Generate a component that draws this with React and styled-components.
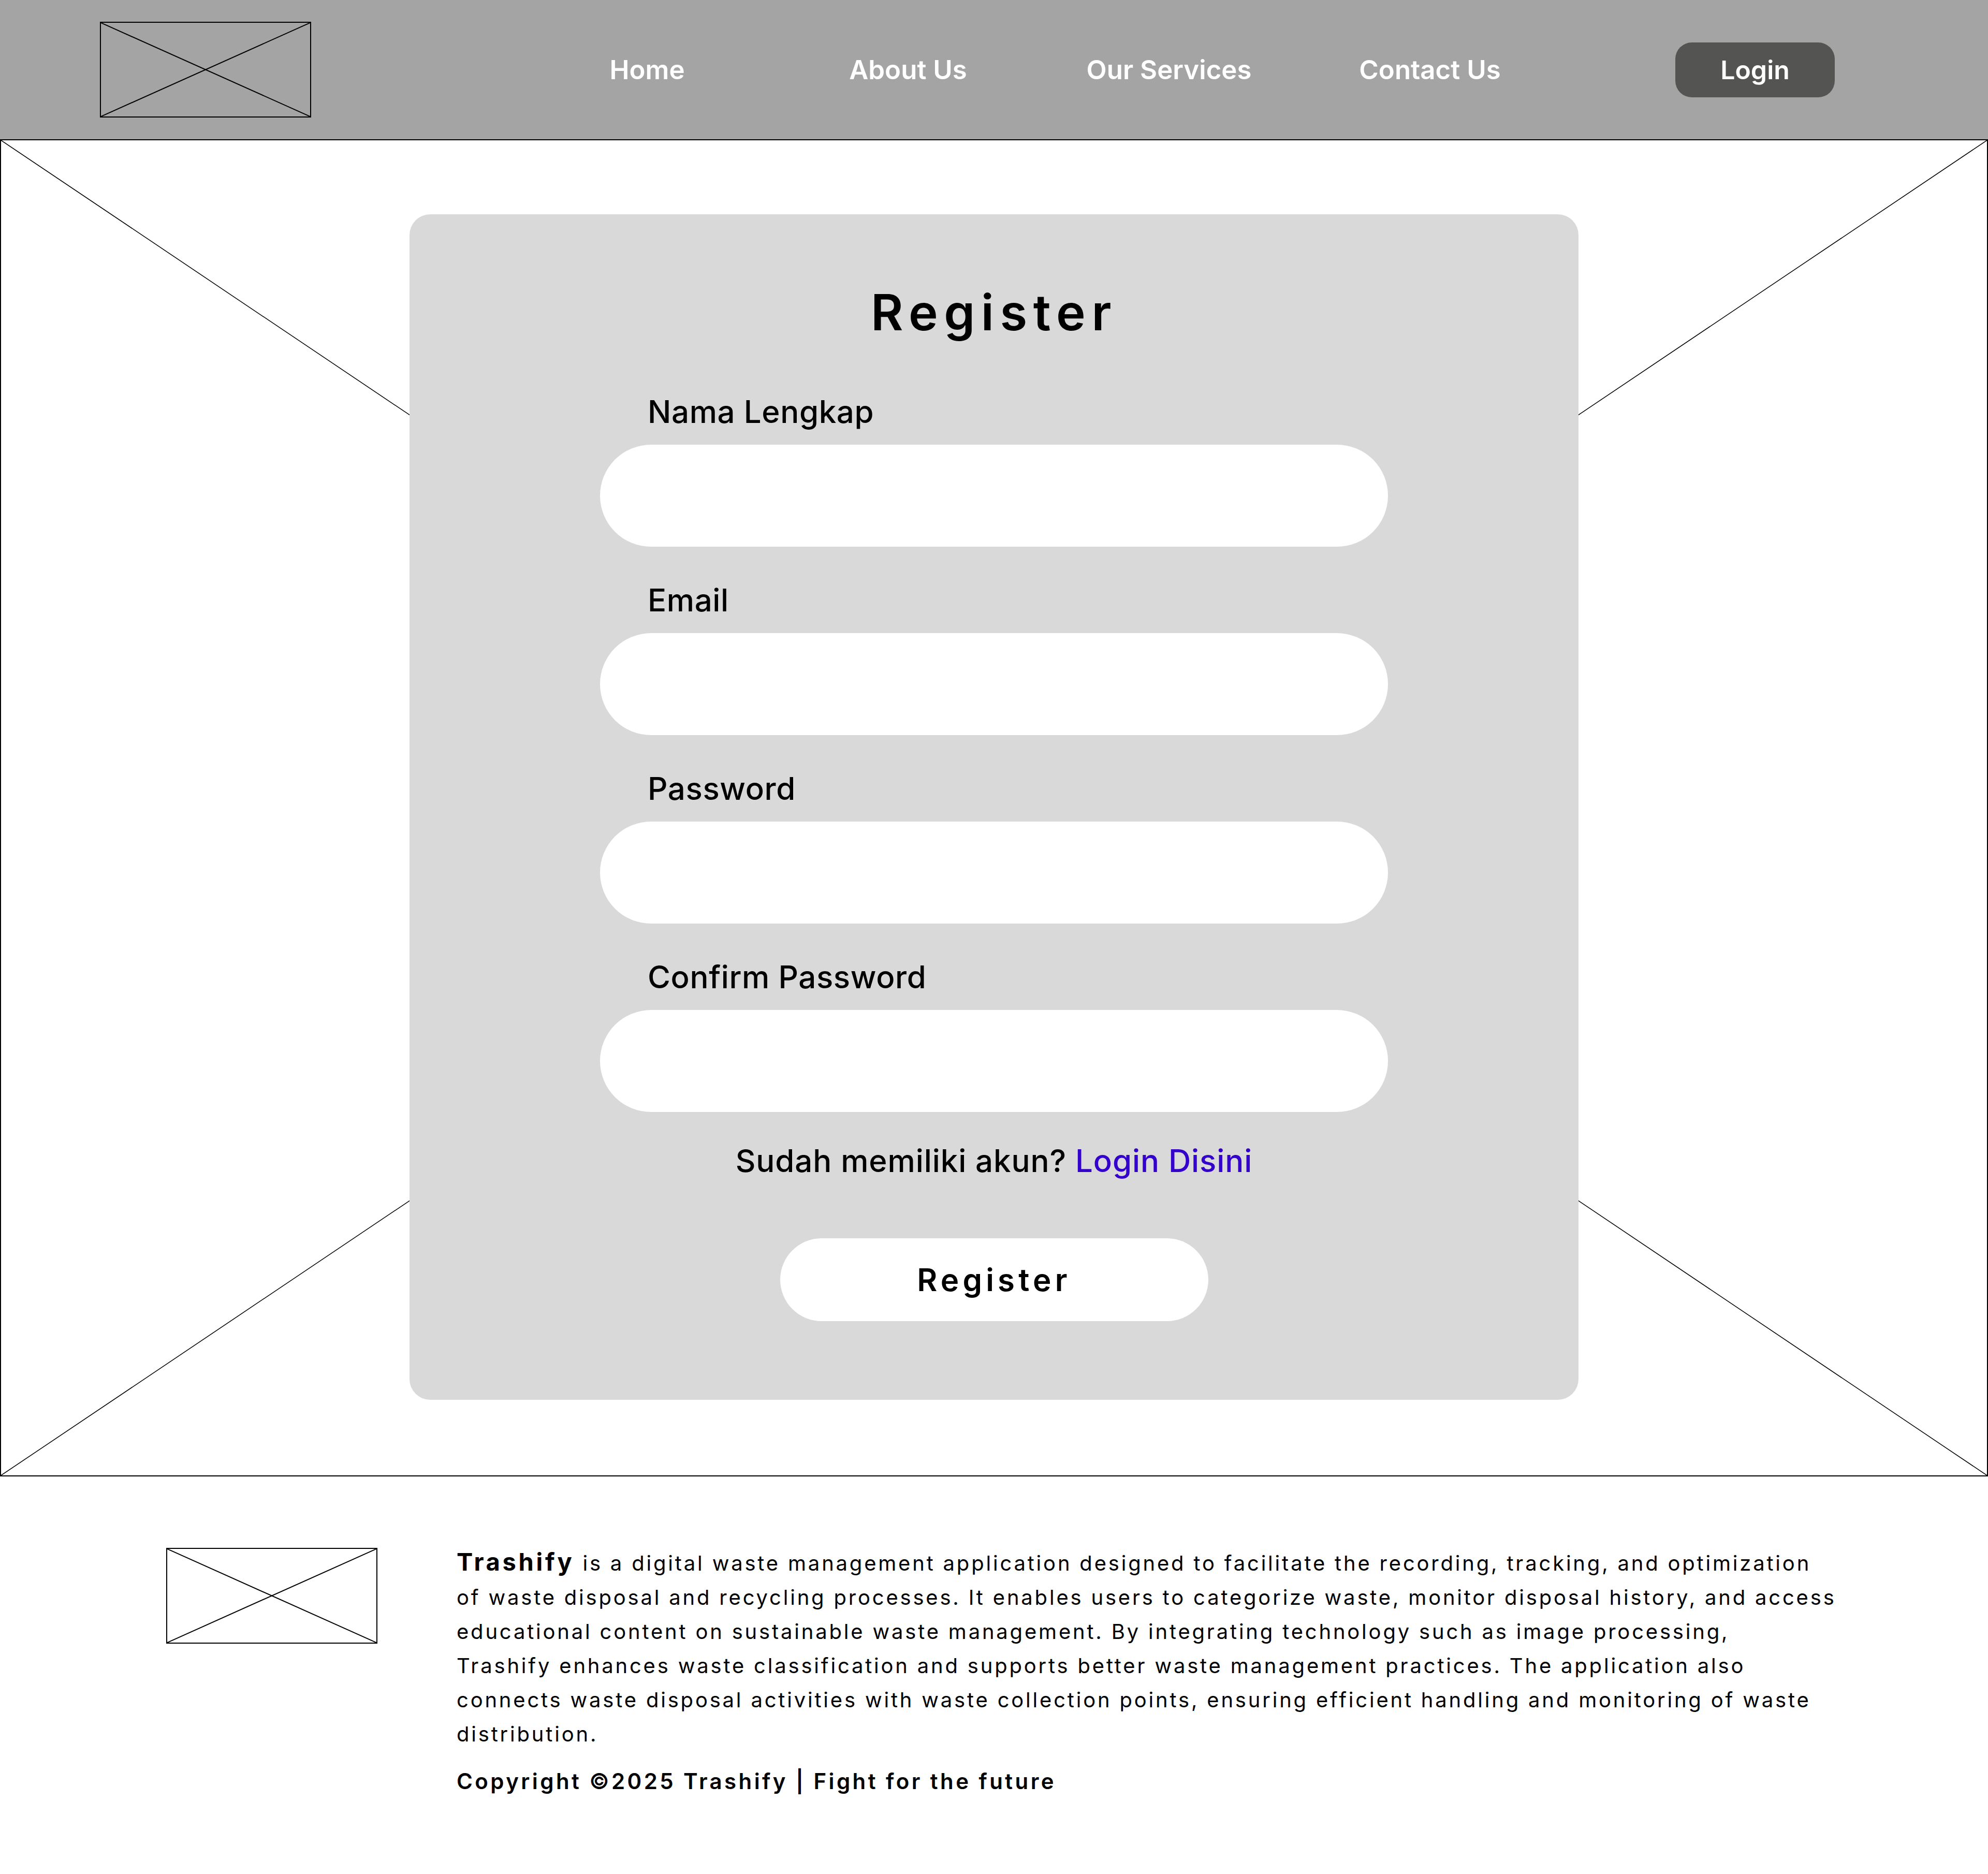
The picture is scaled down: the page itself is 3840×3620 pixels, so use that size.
import React from "react";
import styled, { createGlobalStyle } from "styled-components";

const GlobalStyle = createGlobalStyle`
  * {
    box-sizing: border-box;
  }
  body {
    margin: 0;
    background: #fff;
    font-family: Inter, "Liberation Sans", sans-serif;
    color: #000;
  }
`;

const Page = styled.div`
  width: 3840px;
  min-height: 3620px;
  display: flex;
  flex-direction: column;
`;

const Header = styled.header`
  height: 271px;
  background: #a4a4a4;
  border-bottom: 2px solid #000;
  display: flex;
  align-items: center;
  padding-left: 193px;
`;

const LogoBox = styled.div`
  width: 408px;
  height: 185px;
  border: 2px solid #000;
  flex-shrink: 0;
  svg {
    display: block;
    width: 100%;
    height: 100%;
  }
`;

const Nav = styled.nav`
  display: grid;
  grid-template-columns: repeat(4, 504px);
  margin-left: 397px;
`;

const NavLink = styled.a`
  text-align: center;
  color: #fff;
  font-size: 51px;
  font-weight: 600;
  text-decoration: none;
`;

const LoginButton = styled.button`
  margin-left: 222px;
  width: 308px;
  height: 106px;
  border: none;
  border-radius: 32px;
  background: #545452;
  color: #fff;
  font-family: inherit;
  font-size: 50px;
  font-weight: 600;
`;

const Hero = styled.section`
  position: relative;
  height: 2581px;
  border-bottom: 2px solid #000;
  border-left: 2px solid #000;
  border-right: 2px solid #000;
  padding-top: 143px;
  display: flex;
  justify-content: center;
  align-items: flex-start;
`;

const HeroLines = styled.svg`
  position: absolute;
  inset: 0;
  width: 100%;
  height: 100%;
`;

const Card = styled.div`
  position: relative;
  width: 2258px;
  background: #d9d9d9;
  border-radius: 40px;
  padding: 132px 368px 152px;
  display: flex;
  flex-direction: column;
`;

const Title = styled.h1`
  margin: 0 0 98px;
  text-align: center;
  font-size: 96px;
  line-height: 115px;
  font-weight: 600;
  letter-spacing: 0.12em;
`;

const Field = styled.div`
  display: flex;
  flex-direction: column;
  margin-bottom: 67px;
  &:last-of-type {
    margin-bottom: 58px;
  }
`;

const Label = styled.label`
  padding-left: 92px;
  margin-bottom: 28px;
  font-size: 60px;
  line-height: 72px;
  font-weight: 500;
  letter-spacing: 0.01em;
`;

const Input = styled.input`
  height: 197px;
  width: 100%;
  border: none;
  border-radius: 99px;
  background: #fff;
  padding: 0 80px;
  font-family: inherit;
  font-size: 50px;
  outline: none;
`;

const Switch = styled.p`
  margin: 0 0 114px;
  text-align: center;
  font-size: 60px;
  line-height: 72px;
  font-weight: 500;
  letter-spacing: 0.015em;
`;

const SwitchLink = styled.a`
  color: #3300cc;
  text-decoration: none;
`;

const SubmitButton = styled.button`
  align-self: center;
  width: 827px;
  height: 160px;
  border: none;
  border-radius: 80px;
  background: #fff;
  color: #000;
  font-family: inherit;
  font-size: 60px;
  font-weight: 600;
  letter-spacing: 0.12em;
`;

const Footer = styled.footer`
  display: flex;
  align-items: flex-start;
  padding: 138px 0 120px 321px;
`;

const FooterText = styled.div`
  margin-left: 153px;
  margin-top: -6px;
`;

const About = styled.p`
  margin: 0;
  font-size: 40px;
  line-height: 66px;
  letter-spacing: 0.095em;
  white-space: nowrap;
`;

const Brand = styled.strong`
  font-size: 47px;
  font-weight: 700;
  letter-spacing: 0.1em;
  margin-right: 16px;
`;

const Copyright = styled.p`
  margin: 33px 0 0;
  font-size: 42px;
  line-height: 50px;
  font-weight: 600;
  letter-spacing: 0.105em;
`;

const Placeholder = () => (
  <LogoBox>
    <svg viewBox="0 0 100 100" preserveAspectRatio="none">
      <line x1="0" y1="0" x2="100" y2="100" stroke="#000" strokeWidth="2" vectorEffect="non-scaling-stroke" />
      <line x1="100" y1="0" x2="0" y2="100" stroke="#000" strokeWidth="2" vectorEffect="non-scaling-stroke" />
    </svg>
  </LogoBox>
);

const fields = ["Nama Lengkap", "Email", "Password", "Confirm Password"];

const aboutLines = [
  "of waste disposal and recycling processes. It enables users to categorize waste, monitor disposal history, and access",
  "educational content on sustainable waste management. By integrating technology such as image processing,",
  "Trashify enhances waste classification and supports better waste management practices. The application also",
  "connects waste disposal activities with waste collection points, ensuring efficient handling and monitoring of waste",
  "distribution.",
];

const App = () => {
  return (
    <Page>
      <GlobalStyle />
      <Header>
        <Placeholder />
        <Nav>
          <NavLink href="#">Home</NavLink>
          <NavLink href="#">About Us</NavLink>
          <NavLink href="#">Our Services</NavLink>
          <NavLink href="#">Contact Us</NavLink>
        </Nav>
        <LoginButton>Login</LoginButton>
      </Header>

      <Hero>
        <HeroLines viewBox="0 0 100 100" preserveAspectRatio="none">
          <line x1="0" y1="0" x2="100" y2="100" stroke="#000" strokeWidth="1.5" vectorEffect="non-scaling-stroke" />
          <line x1="100" y1="0" x2="0" y2="100" stroke="#000" strokeWidth="1.5" vectorEffect="non-scaling-stroke" />
        </HeroLines>
        <Card>
          <Title>Register</Title>
          {fields.map((f) => (
            <Field key={f}>
              <Label>{f}</Label>
              <Input type={f.includes("Password") ? "password" : "text"} />
            </Field>
          ))}
          <Switch>
            Sudah memiliki akun? <SwitchLink href="#">Login Disini</SwitchLink>
          </Switch>
          <SubmitButton>Register</SubmitButton>
        </Card>
      </Hero>

      <Footer>
        <Placeholder />
        <FooterText>
          <About>
            <Brand>Trashify</Brand>
            is a digital waste management application designed to facilitate the recording, tracking, and optimization
            {aboutLines.map((line) => (
              <React.Fragment key={line}>
                <br />
                {line}
              </React.Fragment>
            ))}
          </About>
          <Copyright>Copyright ©2025 Trashify | Fight for the future</Copyright>
        </FooterText>
      </Footer>
    </Page>
  );
};

export default App;
